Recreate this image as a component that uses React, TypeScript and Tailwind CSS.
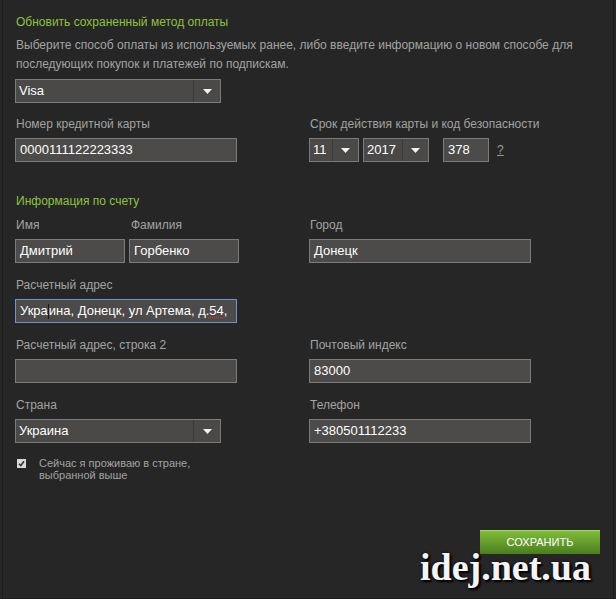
function Label({ children, className = "" }: { children: React.ReactNode; className?: string }) {
  return <div className={`text-[12px] leading-[16px] text-[#a3a3a3] ${className}`}>{children}</div>;
}

function Field({ value, className = "" }: { value?: React.ReactNode; className?: string }) {
  return (
    <div
      className={`h-[24px] border border-[#7b7b7b] bg-[#4c4b49] px-[4px] flex items-center text-[13px] text-white whitespace-nowrap overflow-hidden ${className}`}
    >
      {value}
    </div>
  );
}

function Arrow() {
  return (
    <svg width="9" height="5" viewBox="0 0 9 5">
      <path d="M0 0h9L4.5 5z" fill="#f2f2f2" />
    </svg>
  );
}

function Select({ value, width, arrowW }: { value: string; width: string; arrowW: string }) {
  return (
    <div className={`${width} h-[24px] border border-[#7b7b7b] bg-[#4a4947] flex items-stretch text-[13px] text-white`}>
      <div className="flex-1 flex items-center px-[3px]">{value}</div>
      <div className={`${arrowW} border-l border-[#3a3938] flex items-center justify-center`}>
        <Arrow />
      </div>
    </div>
  );
}

export default function App() {
  return (
    <div className="w-[616px] h-[599px] bg-[#262626] relative overflow-hidden font-['Liberation_Sans',Arial,sans-serif]">
      <div className="h-full mx-[2px] border-x border-b border-[#1c1c1c] pl-[12px] pt-[14px]">
        <div className="pl-px text-[12px] leading-[16px] text-[#8dc23f]">Обновить сохраненный метод оплаты</div>
        <p className="pl-px mt-[6px] text-[12px] leading-[19px] text-[#a3a3a3]">
          Выберите способ оплаты из используемых ранее, либо введите информацию о новом способе для
          <br />
          последующих покупок и платежей по подпискам.
        </p>
        <div className="mt-[5px]">
          <Select value="Visa" width="w-[206px]" arrowW="w-[27px]" />
        </div>

        <div className="mt-[13px] grid grid-cols-[294px_1fr]">
          <div>
            <Label className="pl-px">Номер кредитной карты</Label>
            <Field value="0000111122223333" className="mt-[6px] w-[222px]" />
          </div>
          <div>
            <Label className="pl-px">Срок действия карты и код безопасности</Label>
            <div className="mt-[6px] flex items-center">
              <Select value="11" width="w-[50px]" arrowW="w-[26px]" />
              <div className="ml-[4px]">
                <Select value="2017" width="w-[66px]" arrowW="w-[26px]" />
              </div>
              <Field value="378" className="ml-[14px] w-[46px]" />
              <span className="ml-[8px] text-[12px] text-[#9a9a9a] underline">?</span>
            </div>
          </div>
        </div>

        <div className="pl-px mt-[31px] text-[12px] leading-[16px] text-[#8dc23f]">Информация по счету</div>
        <div className="mt-[8px] grid grid-cols-[294px_1fr]">
          <div className="flex gap-[4px]">
            <div>
              <Label className="pl-px">Имя</Label>
              <Field value="Дмитрий" className="mt-[6px] w-[110px]" />
            </div>
            <div>
              <Label className="pl-[2px]">Фамилия</Label>
              <Field value="Горбенко" className="mt-[6px] w-[110px]" />
            </div>
          </div>
          <div>
            <Label className="pl-px">Город</Label>
            <Field value="Донецк" className="mt-[6px] w-[222px]" />
          </div>
        </div>

        <div className="mt-[14px]">
          <Label className="pl-px">Расчетный адрес</Label>
          <Field
            className="mt-[6px] w-[222px] !border-[#6f93cf]"
            value={
              <>
                Укра<span className="inline-block w-px h-[15px] bg-[#1a1a1a] align-middle" />ина, Донецк, ул Артема,&nbsp;
                <span className="underline decoration-dotted decoration-[#d33] underline-offset-2">д.54</span>,
              </>
            }
          />
        </div>

        <div className="mt-[14px] grid grid-cols-[294px_1fr]">
          <div>
            <Label className="pl-px">Расчетный адрес, строка 2</Label>
            <Field className="mt-[6px] w-[222px]" />
          </div>
          <div>
            <Label className="pl-px">Почтовый индекс</Label>
            <Field value="83000" className="mt-[6px] w-[222px]" />
          </div>
        </div>

        <div className="mt-[14px] grid grid-cols-[294px_1fr]">
          <div>
            <Label className="pl-px">Страна</Label>
            <div className="mt-[6px]">
              <Select value="Украина" width="w-[206px]" arrowW="w-[27px]" />
            </div>
          </div>
          <div>
            <Label className="pl-px">Телефон</Label>
            <Field value="+380501112233" className="mt-[6px] w-[222px]" />
          </div>
        </div>

        <div className="mt-[14px] flex items-start">
          <span className="mt-[2px] ml-[2px] w-[9px] h-[9px] bg-[#d8d8d8] flex items-center justify-center">
            <svg width="7" height="7" viewBox="0 0 7 7">
              <path d="M1 3.8l1.8 1.8L6 1.2" stroke="#333" strokeWidth="1.6" fill="none" />
            </svg>
          </span>
          <div className="ml-[13px] text-[11px] leading-[12px] text-[#a3a3a3]">
            Сейчас я проживаю в стране,
            <br />
            выбранной выше
          </div>
        </div>

        <div className="mt-[49px] flex justify-end pr-[13px]">
          <button className="w-[120px] h-[24px] bg-gradient-to-b from-[#80bd3c] to-[#4b7d1d] border-t border-[#a3d865] text-[11px] text-white uppercase">
            Сохранить
          </button>
        </div>
      </div>

      <div className="absolute left-[420px] top-[547px] text-[38px] leading-[40px] font-bold text-[#f4f4f4] font-['Liberation_Serif',serif] [text-shadow:2px_2px_2px_#000,0_0_3px_#000]">
        idej.net.ua
      </div>
    </div>
  );
}
